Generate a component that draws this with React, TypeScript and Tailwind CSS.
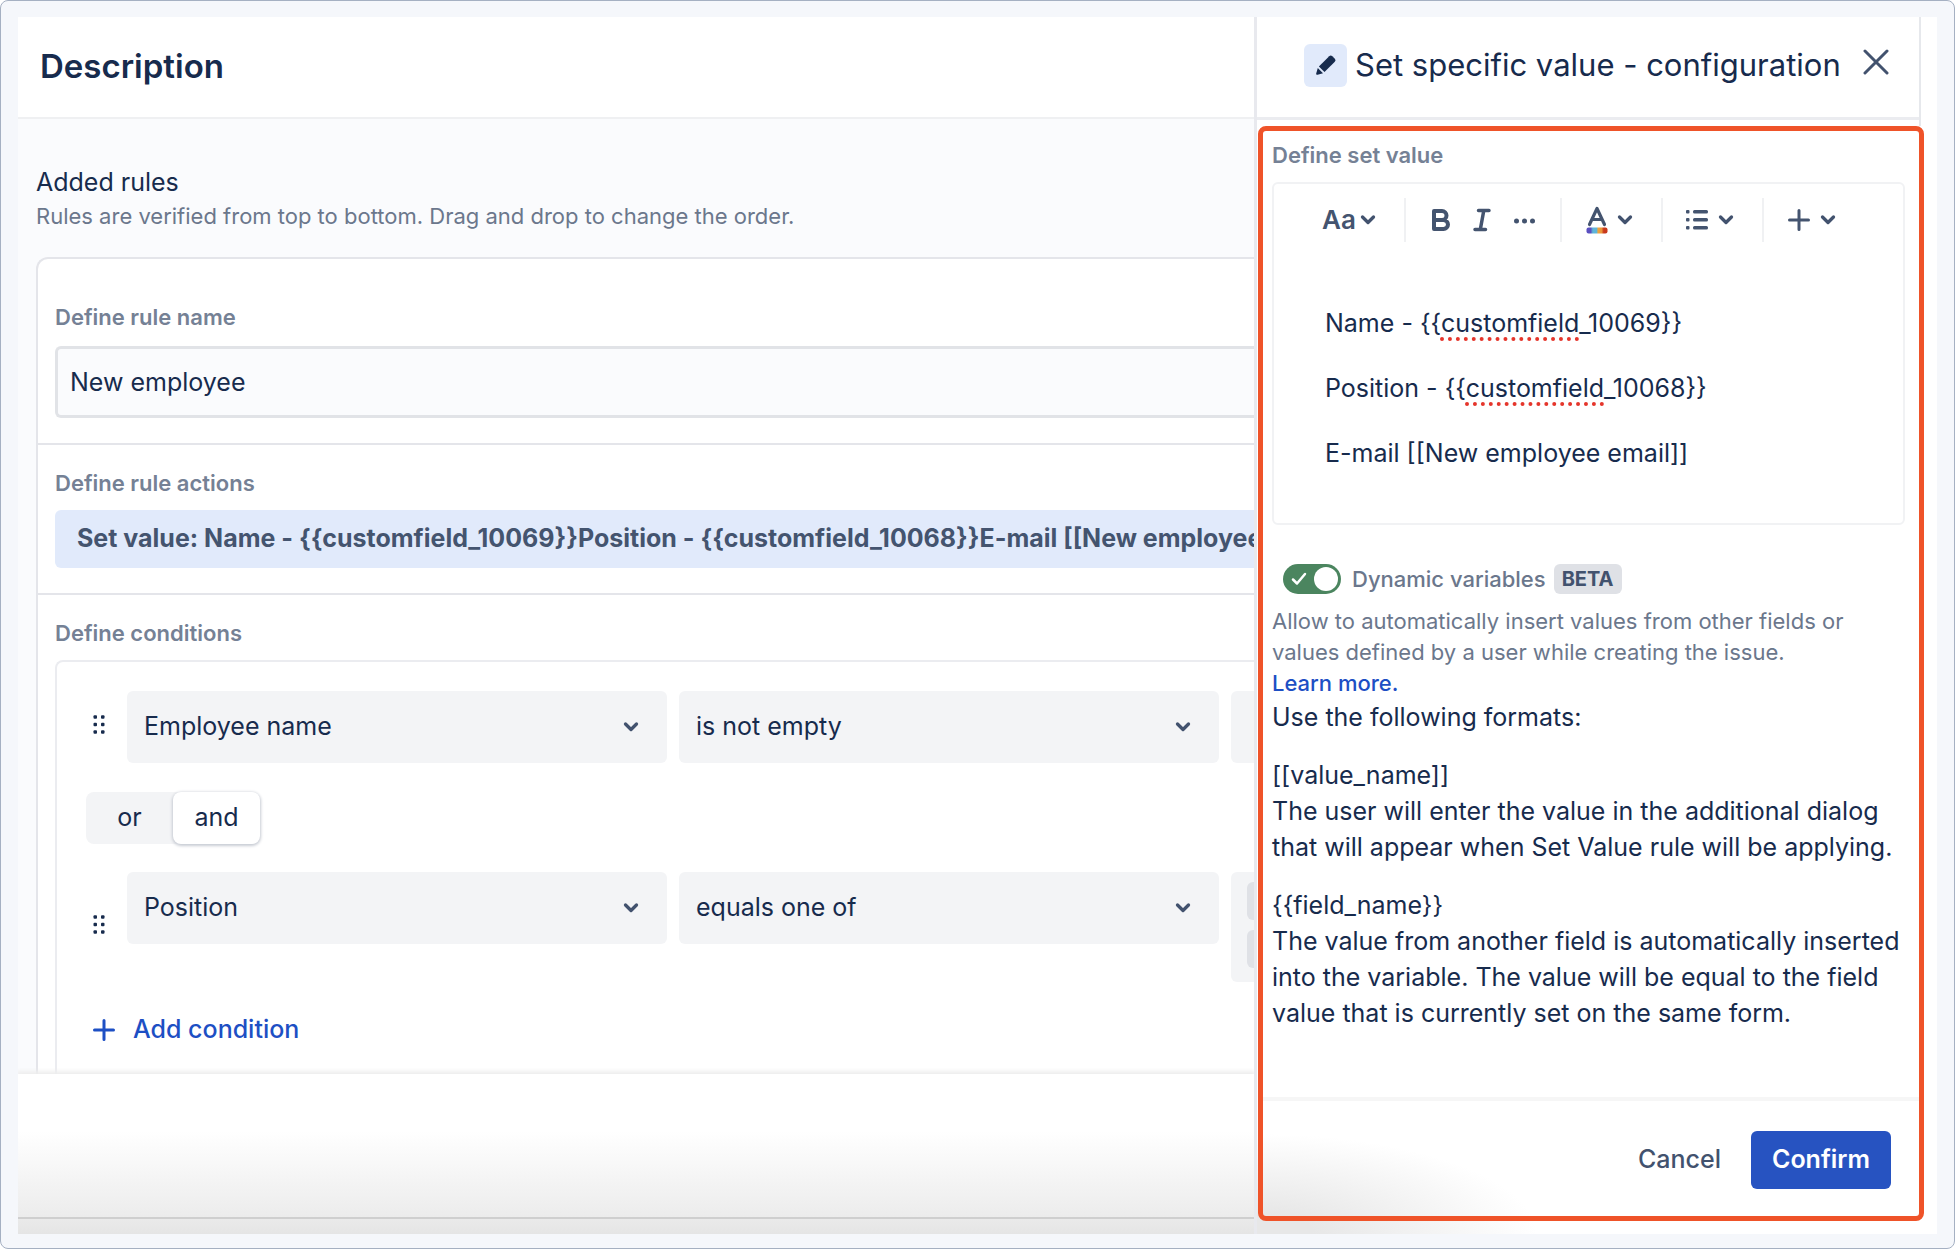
import type { ReactNode } from "react";

function Chevron({ className = "" }: { className?: string }) {
  return (
    <svg viewBox="0 0 16 12" width="16" height="12" fill="none" className={className} aria-hidden="true">
      <path d="M2.500 3 8 8.500 13.500 3" stroke="#42526e" strokeWidth="3.300" strokeLinecap="round" strokeLinejoin="round" />
    </svg>
  );
}

function DragHandle() {
  return (
    <button type="button" aria-label="Drag condition" className="mr-[22px] flex h-6 w-3 shrink-0 items-center self-center">
      <svg viewBox="0 0 12 24" width="12" height="24" fill="#172b4d" aria-hidden="true">
        {[2, 9.5, 17].map((y) => (
          <g key={y}>
            <rect x="0.500" y={y - 1.75} width="3.500" height="3.500" rx="1" />
            <rect x="8" y={y - 1.75} width="3.500" height="3.500" rx="1" />
          </g>
        ))}
      </svg>
    </button>
  );
}

function Select({ label, value }: { label: string; value: string }) {
  return (
    <div className="relative h-[72px] w-[540px] shrink-0">
      <select
        aria-label={label}
        defaultValue={value}
        className="h-full w-full appearance-none rounded-md bg-[#f3f4f6] pr-12 pl-[17px] text-[25px] text-[#172b4d]"
      >
        <option>{value}</option>
      </select>
      <Chevron className="pointer-events-none absolute top-[30px] right-7" />
    </div>
  );
}

function RulesPane() {
  return (
    <main className="flex min-w-0 flex-1 flex-col overflow-hidden">
      <header className="flex h-[102px] shrink-0 items-center border-b-2 border-[#eff0f2] bg-white px-[22px] pb-0.5">
        <h1 className="text-[33px] leading-10 font-semibold">Description</h1>
      </header>

      <div className="shrink-0 overflow-hidden bg-[#fafbfd] pt-[45px] pl-[18px]">
        <h2 className="text-[25px] leading-9">Added rules</h2>
        <p className="text-[22px] leading-8 text-[#6b778c]">
          Rules are verified from top to bottom. Drag and drop to change the order.
        </p>

        <section className="mt-[25px] rounded-tl-xl border-t-2 border-l-2 border-[#e4e5ea] bg-white">
          <div className="border-b-2 border-[#e4e5ea] pt-[42px] pb-[25px] pl-[17px]">
            <label htmlFor="rule-name" className="block text-[22px] leading-8 font-semibold text-[#758195]">
              Define rule name
            </label>
            <input
              id="rule-name"
              type="text"
              defaultValue="New employee"
              className="mt-[13px] block h-[72px] w-full rounded-l-md border-3 border-r-0 border-[#e1e3e7] bg-[#fafbfd] px-3 text-[25px]"
            />
          </div>

          <div className="border-b-2 border-[#e4e5ea] pt-[22px] pb-[25px] pl-[17px]">
            <h3 className="text-[22px] leading-8 font-semibold text-[#758195]">Define rule actions</h3>
            <div className="mt-[11px] flex h-[58px] items-center overflow-hidden rounded-l-md bg-[#e1eafb] pl-[22px] text-[25px] font-bold whitespace-nowrap text-[#44546f]">
              Set value: Name - {"{{customfield_10069}}"}Position - {"{{customfield_10068}}"}E-mail [[New employee email]]
            </div>
          </div>

          <div className="pt-[22px] pl-[17px]">
            <h3 className="text-[22px] leading-8 font-semibold text-[#758195]">Define conditions</h3>
            <div className="mt-[11px] rounded-tl-lg border-t-2 border-l-2 border-[#ebecf0] pt-[29px] pb-6">
              <div className="flex gap-3 pl-9">
                <div className="flex">
                  <DragHandle />
                  <Select label="First field" value="Employee name" />
                </div>
                <Select label="First operator" value="is not empty" />
                <div className="w-[540px] shrink-0 rounded-md bg-[#f3f4f6]" />
              </div>

              <div className="mt-[29px] mb-7 ml-[29px] flex h-[52px] w-[174px] items-stretch rounded-lg bg-[#f3f4f6] text-[25px]">
                <button type="button" aria-pressed="false" className="flex-1">
                  or
                </button>
                <button
                  type="button"
                  aria-pressed="true"
                  className="flex-1 rounded-lg bg-white shadow-[0_1px_3px_1px_#c8ccd4]"
                >
                  and
                </button>
              </div>

              <div className="flex gap-3 pl-9">
                <div className="flex">
                  <DragHandle />
                  <Select label="Second field" value="Position" />
                </div>
                <Select label="Second operator" value="equals one of" />
                <div className="flex h-[110px] w-[540px] shrink-0 flex-col gap-[10px] rounded-md bg-[#f3f4f6] px-4 pt-[10px]">
                  <span className="h-[38px] w-40 rounded-md bg-[#dfe1e6]" />
                  <span className="h-[38px] w-40 rounded-md bg-[#dfe1e6]" />
                </div>
              </div>

              <button
                type="button"
                className="mt-7 ml-9 flex h-10 items-center gap-[18px] text-[25px] font-medium text-[#1d4fc4]"
              >
                <svg viewBox="0 0 22 22" width="22" height="22" fill="none" aria-hidden="true">
                  <path d="M11 1.500v19M1.500 11h19" stroke="currentColor" strokeWidth="3" strokeLinecap="round" />
                </svg>
                Add condition
              </button>
            </div>
          </div>
        </section>
      </div>

      <footer className="flex flex-1 flex-col shadow-[0_-2px_4px_1px_#eeeeee]">
        <div className="min-h-24 flex-1 border-b-2 border-[#cfcfcf] bg-linear-to-b from-white from-40% to-[#ececec]" />
        <div className="h-[15px] shrink-0 bg-linear-to-b from-[#eaeaea] to-[#e5e5e5]" />
      </footer>
    </main>
  );
}

function ToolDivider() {
  return <span className="h-11 w-0.5 shrink-0 bg-[#f0f1f3]" />;
}

function Toolbar() {
  return (
    <div role="toolbar" aria-label="Text formatting" className="flex h-[71px] items-center pl-12 text-[#44546f]">
      <div className="flex w-[82px]">
        <button type="button" aria-label="Text styles" className="flex items-center gap-1 text-[26px] font-semibold">
          Aa
          <Chevron />
        </button>
      </div>
      <ToolDivider />
      <div className="flex w-[154px] items-center gap-[22px] pl-[25px]">
        <button type="button" aria-label="Bold">
          <svg viewBox="0 0 20 24" width="20" height="24" fill="none" stroke="currentColor" strokeWidth="4" strokeLinejoin="round" aria-hidden="true">
            <path d="M3 3h8a4.400 4.400 0 0 1 0 9H3zM3 12h9.500a4.500 4.500 0 0 1 0 9H3z" />
          </svg>
        </button>
        <button type="button" aria-label="Italic">
          <svg viewBox="0 0 18 24" width="18" height="24" fill="none" stroke="currentColor" strokeWidth="3.500" strokeLinecap="round" aria-hidden="true">
            <path d="M5.500 2.500H16M2 21.500h10.500M10.800 2.500 7.300 21.500" />
          </svg>
        </button>
        <button type="button" aria-label="More formatting">
          <svg viewBox="0 0 24 24" width="24" height="24" fill="currentColor" aria-hidden="true">
            <circle cx="3.500" cy="13" r="2.500" />
            <circle cx="11.500" cy="13" r="2.500" />
            <circle cx="19.500" cy="13" r="2.500" />
          </svg>
        </button>
      </div>
      <ToolDivider />
      <button type="button" aria-label="Text colour" className="flex w-[99px] items-center gap-[9px] pl-6">
        <svg viewBox="0 0 22 28" width="22" height="28" fill="none" aria-hidden="true">
          <defs>
            <linearGradient id="spectrum">
              <stop offset="0.2" stopColor="#5a4fc0" />
              <stop offset="0.3" stopColor="#5fb5d8" />
              <stop offset="0.48" stopColor="#5fb5d8" />
              <stop offset="0.55" stopColor="#f0a53c" />
              <stop offset="0.72" stopColor="#e9953a" />
              <stop offset="0.82" stopColor="#c8381c" />
            </linearGradient>
          </defs>
          <path d="M3.500 18.500 11 2.500 18.500 18.500M6 13.500h10" stroke="currentColor" strokeWidth="3.200" strokeLinecap="round" strokeLinejoin="round" />
          <rect x="0.500" y="21.500" width="21" height="6" rx="2" fill="url(#spectrum)" />
        </svg>
        <Chevron />
      </button>
      <ToolDivider />
      <button type="button" aria-label="Lists" className="flex w-[99px] items-center gap-[10px] pl-[23px]">
        <svg viewBox="0 0 22 22" width="22" height="22" fill="currentColor" aria-hidden="true">
          {[2.5, 10.5, 18.5].map((y) => (
            <g key={y}>
              <rect x="0" y={y - 1.5} width="3.500" height="3.500" rx="1" />
              <rect x="7" y={y - 1.5} width="15" height="3.500" rx="1.500" />
            </g>
          ))}
        </svg>
        <Chevron />
      </button>
      <ToolDivider />
      <button type="button" aria-label="Insert" className="flex items-center gap-[10px] pl-6">
        <svg viewBox="0 0 22 22" width="22" height="22" fill="none" aria-hidden="true">
          <path d="M11 1.500v19M1.500 11h19" stroke="currentColor" strokeWidth="3" strokeLinecap="round" />
        </svg>
        <Chevron />
      </button>
    </div>
  );
}

function Misspelt({ children }: { children: ReactNode }) {
  return (
    <span className="underline decoration-[#e5352b] decoration-dotted decoration-4 underline-offset-[5px] [text-decoration-skip-ink:none]">
      {children}
    </span>
  );
}

function ConfigPanel() {
  return (
    <aside className="flex w-[683px] shrink-0 flex-col border-l-3 border-[#e8e9ee] bg-[radial-gradient(280px_100px_at_0%_100%,#e7e7e7_20%,#ffffff_100%)]">
      <div className="mr-4 border-r-2 border-[#e6e8ec] bg-white pb-1.5">
        <header className="flex h-[103px] items-center border-b-3 border-[#ebecf0] pr-[30px] pb-1 pl-[47px]">
          <span className="flex size-[43px] shrink-0 items-center justify-center rounded-md bg-[#e1eafb]">
            <svg viewBox="0 0 24 24" width="24" height="24" fill="#172b4d" aria-hidden="true">
              <path d="M15.200 3.200a2.200 2.200 0 0 1 3.100 0l2.500 2.500a2.200 2.200 0 0 1 0 3.100L10.500 19.100l-5.600-5.600z" />
              <path d="m3.800 15 5.200 5.200-5.400 1.600c-.9.200-1.600-.500-1.400-1.400z" />
            </svg>
          </span>
          <h2 className="ml-2 flex-1 text-[31px] leading-10 whitespace-nowrap">Set specific value - configuration</h2>
          <button type="button" aria-label="Close" className="mb-1.5 shrink-0">
            <svg viewBox="0 0 26 26" width="26" height="26" fill="none" aria-hidden="true">
              <path d="M2 2 24 24M24 2 2 24" stroke="#42526e" strokeWidth="3" strokeLinecap="round" />
            </svg>
          </button>
        </header>
      </div>

      <section className="mr-[13px] mb-[13px] ml-px flex flex-1 flex-col rounded-lg border-5 border-[#ef5329]">
        <div className="flex-1 px-[9px] pt-2 pb-[65px]">
          <p id="set-value-label" className="text-[22px] leading-8 font-semibold text-[#758195]">
            Define set value
          </p>
          <div className="mt-[11px] mr-[5px] rounded-md border-2 border-[#f1f2f4] bg-white">
            <Toolbar />
            <div
              role="textbox"
              aria-multiline="true"
              aria-labelledby="set-value-label"
              contentEditable
              suppressContentEditableWarning
              spellCheck={false}
              className="flex flex-col gap-[29px] px-[51px] pt-[50px] pb-[52px] text-[25px] leading-9"
            >
              <p>
                Name - {"{{"}
                <Misspelt>customfield</Misspelt>
                {"_10069}}"}
              </p>
              <p>
                Position - {"{{"}
                <Misspelt>customfield</Misspelt>
                {"_10068}}"}
              </p>
              <p>E-mail [[New employee email]]</p>
            </div>
          </div>

          <div className="mt-[38px] flex items-center pl-[11px]">
            <label className="flex items-center gap-[11px] text-[22px] leading-8 font-medium text-[#6b778c]">
              <input type="checkbox" role="switch" defaultChecked className="peer sr-only" />
              <span className="flex h-[30px] w-[58px] items-center justify-between rounded-full bg-[#4b855f] pr-[3px] pl-2">
                <svg viewBox="0 0 16 14" width="16" height="14" fill="none" aria-hidden="true">
                  <path d="m2 7.500 4 4L14 2" stroke="#ffffff" strokeWidth="2.500" strokeLinecap="round" strokeLinejoin="round" />
                </svg>
                <span className="size-6 rounded-full bg-white" />
              </span>
              Dynamic variables
            </label>
            <span className="ml-2 flex h-[30px] items-center rounded-md bg-[#dfe1e6] px-2 text-[20px] font-bold text-[#42526e]">
              BETA
            </span>
          </div>

          <p className="mt-[11px] text-[22px] leading-[31px] text-[#6b778c]">
            Allow to automatically insert values from other fields or values defined by a user while creating the issue.
            <br />
            <a href="#learn-more" className="font-medium text-[#1d4fc4]">
              Learn more.
            </a>
          </p>
          <div className="text-[25px] leading-9">
            <p>Use the following formats:</p>
            <p className="mt-[22px]">[[value_name]]</p>
            <p>The user will enter the value in the additional dialog that will appear when Set Value rule will be applying.</p>
            <p className="mt-[22px]">{"{{field_name}}"}</p>
            <p>
              The value from another field is automatically inserted into the variable. The value will be equal to the
              field value that is currently set on the same form.
            </p>
          </div>
        </div>

        <footer className="flex items-center justify-end gap-[30px] border-t-4 border-[#f6f6f6] pt-[30px] pr-7 pb-[27px] text-[25px]">
          <button type="button" className="font-medium text-[#42526e]">
            Cancel
          </button>
          <button type="button" className="h-[58px] rounded-md bg-[#2753c1] px-[21px] font-semibold text-white">
            Confirm
          </button>
        </footer>
      </section>
    </aside>
  );
}

export default function App() {
  return (
    <div className="flex min-h-screen w-full overflow-hidden rounded-lg border border-[#a5b0c2] bg-[#f5f7fb] px-[17px] pt-4 pb-[14px] font-[Inter,'Liberation_Sans',sans-serif] text-[#172b4d]">
      <div className="flex min-w-0 flex-1 bg-white">
        <RulesPane />
        <ConfigPanel />
      </div>
    </div>
  );
}
